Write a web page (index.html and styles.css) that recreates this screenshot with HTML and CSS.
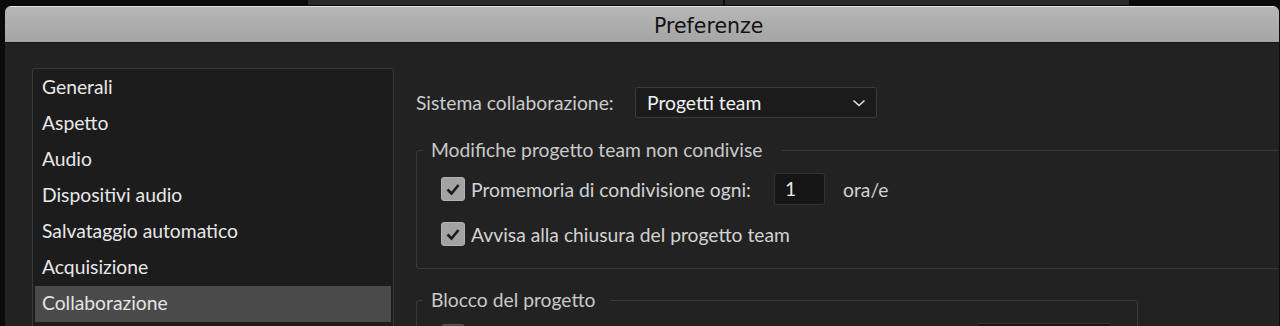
FILE: index.html
```html
<!DOCTYPE html>
<html lang="it">
<head>
  <meta charset="UTF-8">
  <title>Preferenze</title>
  <link rel="stylesheet" href="styles.css">
</head>
<body>
<div class="topstrip">
  <div class="strip-seg seg-a"></div>
  <div class="strip-seg seg-b"></div>
</div>
<div class="window">
  <div class="titlebar"><span class="title">Preferenze</span></div>
  <div class="content">
    <ul class="sidebar">
      <li>Generali</li>
      <li>Aspetto</li>
      <li>Audio</li>
      <li>Dispositivi audio</li>
      <li>Salvataggio automatico</li>
      <li>Acquisizione</li>
      <li class="selected">Collaborazione</li>
    </ul>

    <div class="main">
      <div class="row-system">
        <span class="system-label">Sistema collaborazione:</span>
        <div class="dropdown">
          <span>Progetti team</span>
          <svg class="chevron" width="14" height="8" viewBox="0 0 14 8"><path d="M1.5 1.5 L7 6.5 L12.5 1.5" fill="none" stroke="#e0e0e0" stroke-width="1.6"/></svg>
        </div>
      </div>

      <fieldset class="group group-wide">
        <legend>Modifiche progetto team non condivise</legend>
        <div class="group-body">
          <div class="check-row">
            <span class="checkbox"><svg width="24" height="24" viewBox="0 0 24 24"><path d="M6.5 12.5 L10.5 16.5 L17.5 8" fill="none" stroke="#1c1c1c" stroke-width="2.6"/></svg></span>
            <span class="check-label fixed">Promemoria di condivisione ogni:</span>
            <span class="num-input">1</span>
            <span class="unit">ora/e</span>
          </div>
          <div class="check-row">
            <span class="checkbox"><svg width="24" height="24" viewBox="0 0 24 24"><path d="M6.5 12.5 L10.5 16.5 L17.5 8" fill="none" stroke="#1c1c1c" stroke-width="2.6"/></svg></span>
            <span class="check-label">Avvisa alla chiusura del progetto team</span>
          </div>
        </div>
      </fieldset>

      <fieldset class="group group-lock">
        <legend class="legend-short">Blocco del progetto</legend>
        <div class="group-body lock-body">
          <span class="checkbox"></span>
          <span class="text-input"></span>
        </div>
      </fieldset>
    </div>
  </div>
</div>
</body>
</html>
```

FILE: styles.css
```css
* { margin: 0; padding: 0; box-sizing: border-box; }
body {
  background: #0b0b0b;
  font-family: Lato, 'Open Sans', sans-serif;
  font-size: 19.3px;
  width: 1280px;
  height: 326px;
  overflow: hidden;
}
.topstrip {
  display: flex;
  gap: 2px;
  height: 6px;
  padding-left: 308px;
}
.strip-seg {
  height: 5px;
  background: #2a2a2a;
}
.seg-a { width: 415px; }
.seg-b { width: 404px; }
.window {
  margin-left: 5px;
  width: 1274px;
  height: 320px;
  border-radius: 6px 6px 0 0;
  overflow: hidden;
  background: #222;
}
.titlebar {
  height: 37px;
  background: linear-gradient(#b6b6b6, #a5a5a5);
  border-top: 1px solid #e2e2e2;
  border-bottom: 1px solid #151515;
  padding-left: 649px;
  padding-top: 3px;
  line-height: 32px;
}
.title {
  font-family: 'DejaVu Sans', sans-serif;
  font-size: 20.5px;
  color: #121212;
}
.content {
  display: flex;
  align-items: flex-start;
  padding: 25px 0 0 27px;
}
.sidebar {
  list-style: none;
  width: 362px;
  height: 300px;
  flex-shrink: 0;
  background: #1c1c1c;
  border: 1px solid #383838;
  border-radius: 3px;
  padding: 1px 2px;
}
.sidebar li {
  height: 36px;
  line-height: 33px;
  padding-left: 7px;
  color: #e8e8e8;
}
.sidebar li.selected {
  background: #4a4a4a;
  color: #e4e4e4;
}
.main {
  margin-left: 22px;
  width: 900px;
  flex-shrink: 0;
  color: #cbcbcb;
}
.row-system {
  display: flex;
  align-items: center;
  margin-top: 19px;
}
.system-label { width: 219px; }
.dropdown {
  width: 242px;
  height: 31px;
  display: flex;
  align-items: center;
  justify-content: space-between;
  padding: 0 10px 0 11px;
  background: #1b1b1b;
  border: 1px solid #3b3b3b;
  border-radius: 3px;
  color: #f2f2f2;
}
.group {
  border: 1px solid #3a3a3a;
  border-radius: 3px;
  padding: 0;
}
.group legend {
  margin-left: 6px;
  padding: 0 20px 0 8px;
  line-height: 22px;
  color: #c9c9c9;
}
.group .legend-short { padding-right: 15px; }
.group-body { padding: 12px 0 18px 24px; }
.group-wide {
  width: 900px;
  margin-top: 21px;
}
.group-lock {
  width: 722px;
  margin-top: 20px;
  height: 80px;
}
.check-row {
  display: flex;
  align-items: center;
  height: 32px;
}
.check-row + .check-row { margin-top: 13px; }
.checkbox {
  width: 24px;
  height: 24px;
  border-radius: 3px;
  background: #a3a3a3;
  border: 1px solid #b2b2b2;
  flex-shrink: 0;
  display: flex;
}
.checkbox svg { margin: -1px; }
.check-label {
  margin-left: 6px;
  color: #d2d2d2;
}
.check-label.fixed { width: 303px; }
.num-input {
  width: 51px;
  height: 32px;
  background: #151515;
  border: 1px solid #333;
  border-radius: 3px;
  color: #e8e8e8;
  line-height: 30px;
  padding-left: 10px;
}
.unit {
  margin-left: 18px;
  color: #d2d2d2;
}
.lock-body {
  display: flex;
  align-items: flex-start;
  padding-top: 13px;
}
.lock-body .checkbox { background: #4a4a4a; border-color: #555; }
.text-input {
  width: 136px;
  height: 30px;
  margin-left: 511px;
  margin-top: -1px;
  background: #151515;
  border: 1px solid #333;
  border-radius: 3px;
}
```
